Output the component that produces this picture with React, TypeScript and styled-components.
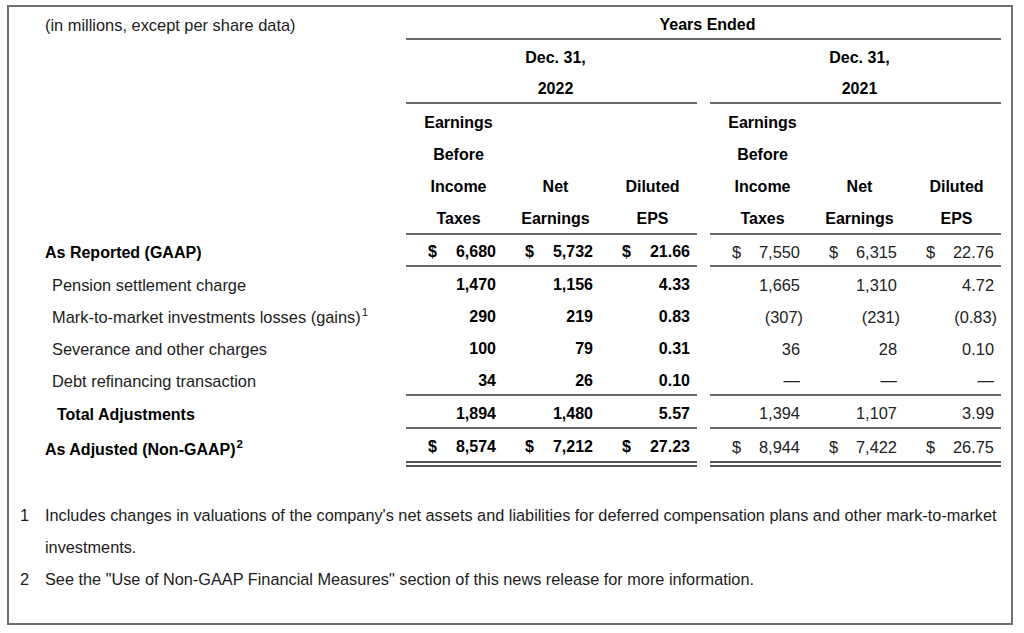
import React from "react";
import styled, { createGlobalStyle, css } from "styled-components";

const GlobalStyle = createGlobalStyle`
    html, body {
        margin: 0;
        padding: 0;
        background: #fff;
    }
    body {
        font-family: "Liberation Sans", Arial, sans-serif;
        font-size: 16.4px;
        color: #1c1c1c;
    }
`;

const Frame = styled.div`
    box-sizing: border-box;
    width: 1006px;
    height: 620px;
    margin: 5px 0 0 7px;
    border: 2px solid #707070;
`;

const Row = styled.div<{ $h: number }>`
    display: grid;
    grid-template-columns: 397px repeat(3, 97px) 13px repeat(3, 97px);
    height: ${(p) => p.$h}px;
`;

type Rule = "none" | "single" | "double";

const ruleCss = (rule?: Rule) => {
    if (rule === "single") return css`border-bottom: 2px solid #6a6a6a;`;
    if (rule === "double") return css`border-bottom: 6px double #555;`;
    return css``;
};

const Cell = styled.div<{ $rule?: Rule }>`
    box-sizing: border-box;
    display: flex;
    align-items: center;
    padding-top: 4px;
    white-space: nowrap;
    ${(p) => ruleCss(p.$rule)}
`;

const Label = styled(Cell)<{ $indent?: number; $bold?: boolean }>`
    padding-left: ${(p) => 36 + (p.$indent || 0)}px;
    font-weight: ${(p) => (p.$bold ? 700 : 400)};
    font-size: ${(p) => (p.$bold ? "16px" : "16.4px")};
    color: ${(p) => (p.$bold ? "#000" : "#1c1c1c")};

    sup {
        font-size: 11.5px;
        font-weight: inherit;
        line-height: 0;
        vertical-align: 0;
        position: relative;
        top: -7px;
        margin-left: 1px;
    }
`;

const Head = styled(Cell)<{ $span?: number }>`
    grid-column: span ${(p) => p.$span || 1};
    justify-content: center;
    padding-left: 14px;
    padding-right: 6px;
    font-size: 16px;
    font-weight: 700;
    color: #000;
`;

const Gap = styled.div``;

const Num = styled(Cell)<{ $bold?: boolean }>`
    justify-content: space-between;
    padding-left: 22px;
    padding-right: 7px;
    font-size: ${(p) => (p.$bold ? "16px" : "16.4px")};
    font-weight: ${(p) => (p.$bold ? 700 : 400)};
    color: ${(p) => (p.$bold ? "#000" : "#222")};
`;

const Value = styled.span`
    margin-left: auto;
`;

const Hang = styled.span`
    margin-right: -3px;
`;

const Notes = styled.div`
    display: grid;
    grid-template-columns: 25px 1fr;
    margin-top: 32px;
    padding-left: 11px;
    font-size: 16.3px;
    line-height: 32px;
    color: #1c1c1c;
`;

type Line = {
    label: string;
    sup?: string;
    indent?: number;
    bold?: boolean;
    dollar?: boolean;
    rule?: Rule;
    h: number;
    y22: string[];
    y21: string[];
};

const lines: Line[] = [
    { label: "As Reported (GAAP)", bold: true, dollar: true, rule: "single", h: 32, y22: ["6,680", "5,732", "21.66"], y21: ["7,550", "6,315", "22.76"] },
    { label: "Pension settlement charge", indent: 7, h: 32, y22: ["1,470", "1,156", "4.33"], y21: ["1,665", "1,310", "4.72"] },
    { label: "Mark-to-market investments losses (gains)", sup: "1", indent: 7, h: 32, y22: ["290", "219", "0.83"], y21: ["(307)", "(231)", "(0.83)"] },
    { label: "Severance and other charges", indent: 7, h: 32, y22: ["100", "79", "0.31"], y21: ["36", "28", "0.10"] },
    { label: "Debt refinancing transaction", indent: 7, rule: "single", h: 33, y22: ["34", "26", "0.10"], y21: ["—", "—", "—"] },
    { label: "Total Adjustments", indent: 12, bold: true, rule: "single", h: 33, y22: ["1,894", "1,480", "5.57"], y21: ["1,394", "1,107", "3.99"] },
    { label: "As Adjusted (Non-GAAP)", sup: "2", bold: true, dollar: true, rule: "double", h: 38, y22: ["8,574", "7,212", "27.23"], y21: ["8,944", "7,422", "26.75"] },
];

const headRows: { h: number; a: string[]; rule?: Rule }[] = [
    { h: 33, a: ["Earnings", "", ""] },
    { h: 32, a: ["Before", "", ""] },
    { h: 32, a: ["Income", "Net", "Diluted"] },
    { h: 34, a: ["Taxes", "Earnings", "EPS"], rule: "single" },
];

function renderValue(v: string) {
    if (v.startsWith("(")) {
        return (
            <Value>
                {v.slice(0, -1)}
                <Hang>)</Hang>
            </Value>
        );
    }
    return <Value>{v}</Value>;
}

function App() {
    return (
        <>
            <GlobalStyle />
            <Frame>
                <Row $h={33}>
                    <Label>(in millions, except per share data)</Label>
                    <Head $span={7} $rule="single">Years Ended</Head>
                </Row>
                <Row $h={32}>
                    <Label />
                    <Head $span={3}>Dec. 31,</Head>
                    <Gap />
                    <Head $span={3}>Dec. 31,</Head>
                </Row>
                <Row $h={32}>
                    <Label />
                    <Head $span={3} $rule="single">2022</Head>
                    <Gap />
                    <Head $span={3} $rule="single">2021</Head>
                </Row>
                {headRows.map((r, i) => (
                    <Row $h={r.h} key={"h" + i}>
                        <Label />
                        {r.a.map((t, j) => (
                            <Head $rule={r.rule} key={"a" + j}>{t}</Head>
                        ))}
                        <Gap />
                        {r.a.map((t, j) => (
                            <Head $rule={r.rule} key={"b" + j}>{t}</Head>
                        ))}
                    </Row>
                ))}
                {lines.map((l, i) => (
                    <Row $h={l.h} key={"r" + i}>
                        <Label $indent={l.indent} $bold={l.bold}>
                            <span>
                                {l.label}
                                {l.sup && <sup>{l.sup}</sup>}
                            </span>
                        </Label>
                        {l.y22.map((v, j) => (
                            <Num $bold $rule={l.rule} key={"a" + j}>
                                {l.dollar && <span>$</span>}
                                {renderValue(v)}
                            </Num>
                        ))}
                        <Gap />
                        {l.y21.map((v, j) => (
                            <Num $rule={l.rule} key={"b" + j}>
                                {l.dollar && <span>$</span>}
                                {renderValue(v)}
                            </Num>
                        ))}
                    </Row>
                ))}
                <Notes>
                    <span>1</span>
                    <span>
                        Includes changes in valuations of the company's net assets and liabilities for deferred compensation plans and other mark-to-market investments.
                    </span>
                    <span>2</span>
                    <span>See the "Use of Non-GAAP Financial Measures" section of this news release for more information.</span>
                </Notes>
            </Frame>
        </>
    );
}

export default App;
